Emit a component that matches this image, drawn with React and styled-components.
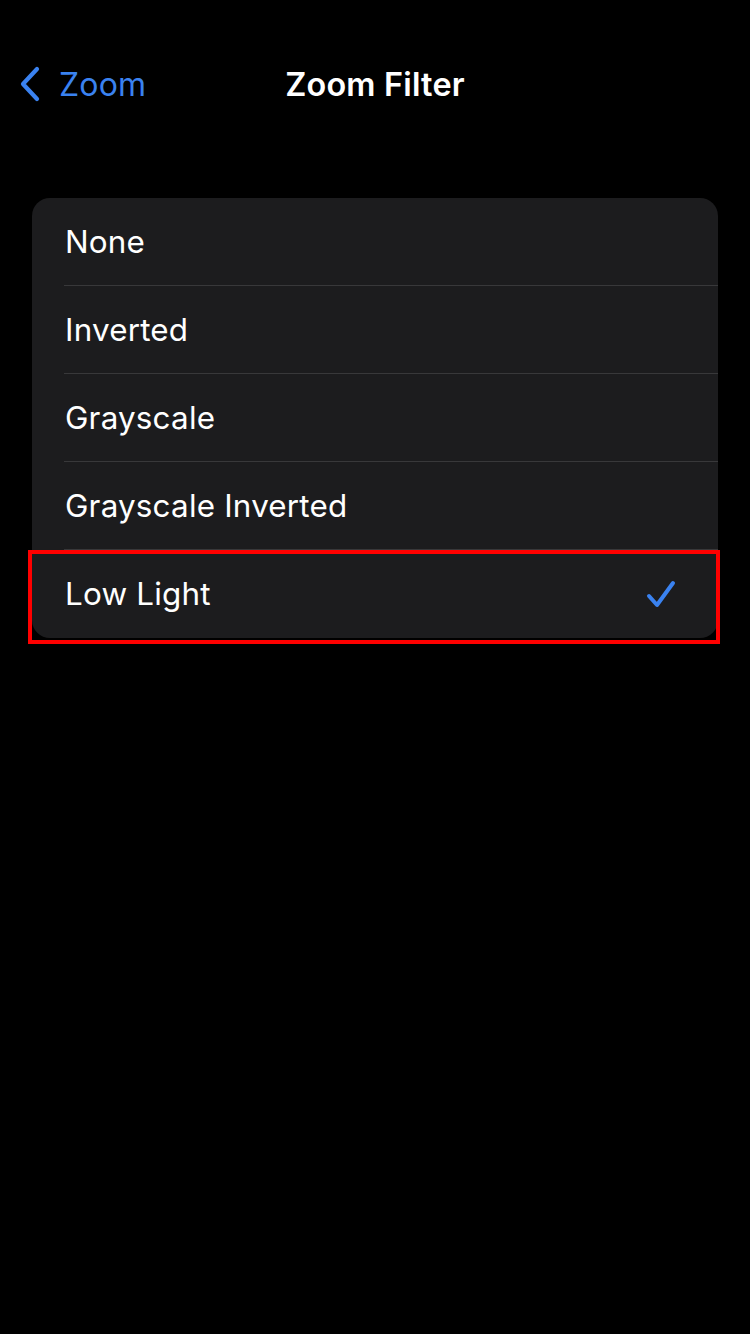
import styled, { createGlobalStyle } from 'styled-components';

const GlobalStyle = createGlobalStyle`
  html, body {
    margin: 0;
    padding: 0;
    background: #000;
  }
  body {
    font-family: Inter, "Noto Sans", sans-serif;
    -webkit-font-smoothing: antialiased;
  }
`;

const Screen = styled.div`
  width: 750px;
  height: 1334px;
  background: #000;
  color: #fff;
  overflow: hidden;
`;

const NavBar = styled.div`
  position: relative;
  height: 88px;
  margin-top: 40px;
  display: flex;
  align-items: center;
  justify-content: center;
`;

const BackButton = styled.div`
  position: absolute;
  left: 18px;
  top: 0;
  bottom: 0;
  display: flex;
  align-items: center;
  gap: 17px;
  color: #3a82f0;
  font-size: 32px;
  letter-spacing: 0.2px;
`;

const Title = styled.div`
  font-size: 32.4px;
  font-weight: 600;
  letter-spacing: 0.2px;
`;

const Card = styled.div`
  position: relative;
  margin: 70px 32px 0 32px;
  background: #1c1c1e;
  border-radius: 18px;
`;

const Row = styled.div`
  position: relative;
  height: 88px;
  display: flex;
  align-items: center;
  justify-content: space-between;
  padding: 0 38px 0 33px;
  font-size: 31.4px;
  letter-spacing: 0.2px;

  &:not(:last-child)::after {
    content: '';
    position: absolute;
    left: 32px;
    right: 0;
    bottom: 0;
    height: 1px;
    background: #38383a;
  }
`;

const Highlight = styled.div`
  position: absolute;
  left: -4px;
  right: -2px;
  top: 0;
  bottom: -6px;
  border: 4px solid #ff0000;
  pointer-events: none;
`;

const items = ['None', 'Inverted', 'Grayscale', 'Grayscale Inverted', 'Low Light'];

export default function App() {
  return (
    <Screen>
      <GlobalStyle />
      <NavBar>
        <BackButton>
          <svg width="24" height="36" viewBox="0 0 24 36">
            <path d="M19 3 L5 18 L19 33" fill="none" stroke="#3a82f0" strokeWidth="4.2" strokeLinecap="round" strokeLinejoin="round" />
          </svg>
          Zoom
        </BackButton>
        <Title>Zoom Filter</Title>
      </NavBar>
      <Card>
        {items.map((label, i) => (
          <Row key={label}>
            {label}
            {i === items.length - 1 && (
              <>
                <svg width="36" height="34" viewBox="0 0 36 34">
                  <path d="M5 19 L13 28 L29 6" fill="none" stroke="#3a82f0" strokeWidth="4" strokeLinecap="round" strokeLinejoin="round" />
                </svg>
                <Highlight />
              </>
            )}
          </Row>
        ))}
      </Card>
    </Screen>
  );
}
